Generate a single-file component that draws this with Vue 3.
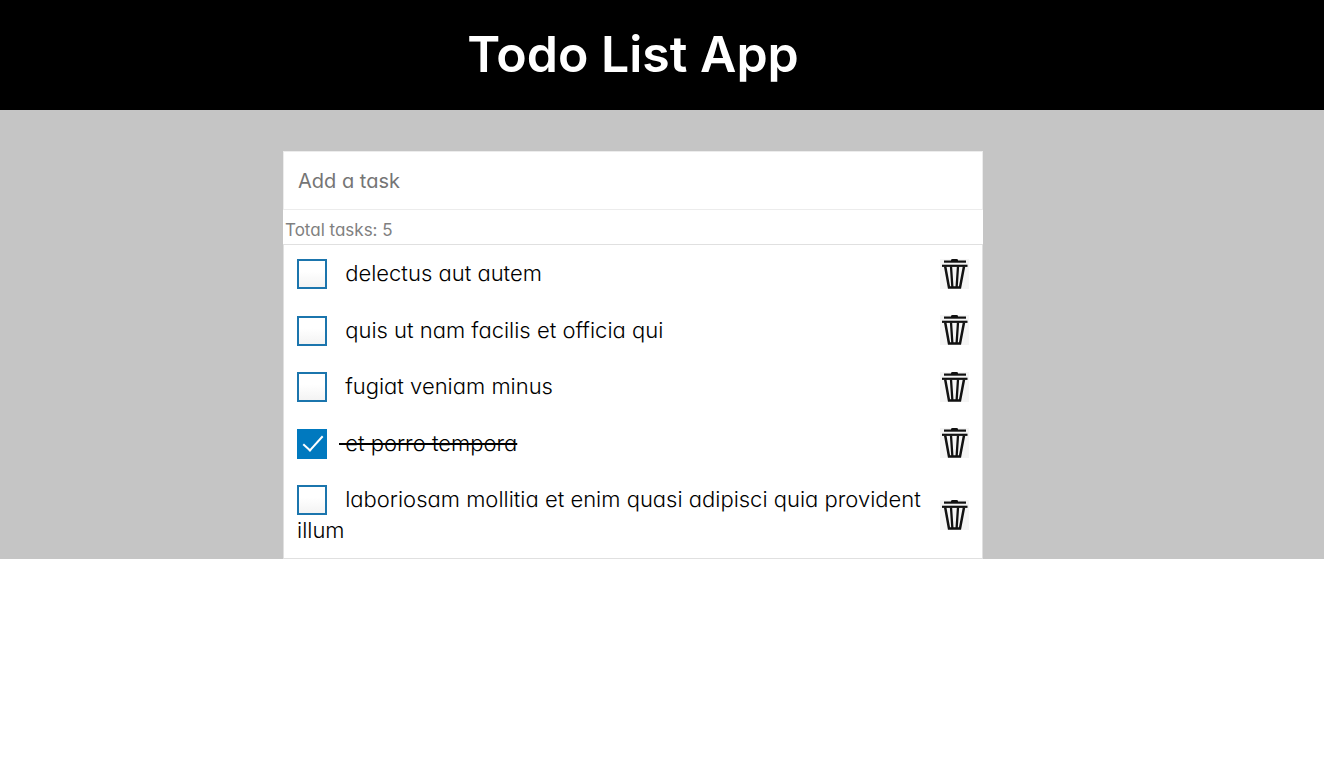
<script setup>
import { ref } from 'vue'

const draft = ref('')
const tasks = ref([
  { id: 1, title: 'delectus aut autem', done: false },
  { id: 2, title: 'quis ut nam facilis et officia qui', done: false },
  { id: 3, title: 'fugiat veniam minus', done: false },
  { id: 4, title: 'et porro tempora', done: true },
  { id: 5, title: 'laboriosam mollitia et enim quasi adipisci quia provident illum', done: false }
])
let nextId = 6

function addTask() {
  const title = draft.value.trim()
  if (!title) return
  tasks.value.push({ id: nextId++, title, done: false })
  draft.value = ''
}

function removeTask(id) {
  tasks.value = tasks.value.filter((task) => task.id !== id)
}
</script>

<template>
  <div class="app">
    <header class="header">
      <h1 class="title">Todo List App</h1>
    </header>
    <main class="main">
      <section class="card">
        <form @submit.prevent="addTask">
          <input v-model="draft" class="new-task" type="text" placeholder="Add a task" aria-label="Add a task" />
        </form>
        <p class="total">Total tasks: {{ tasks.length }}</p>
        <ul class="list">
          <li v-for="task in tasks" :key="task.id" class="task">
            <label class="label">
              <input v-model="task.done" class="check" type="checkbox" />
              <span class="text" :class="{ done: task.done }">&nbsp;{{ task.title }}</span>
            </label>
            <button class="remove" type="button" aria-label="Delete task" @click="removeTask(task.id)">
              <svg viewBox="0 0 29 30" width="29" height="30" aria-hidden="true">
                <path d="M0 0h29v30H0z" fill="#f5f5f5" />
                <path d="M11 2V1.3Q11 0 12.5 0h4Q18 0 18 1.3V2z" fill="#111" />
                <g fill="none" stroke="#111">
                  <path d="M4 2.6h22" stroke-width="2.2" />
                  <path d="M2 6.8h25.500" stroke-width="2.2" />
                  <path d="M5.200 7.500l3.800 21h11L24 7.500" stroke-width="2.500" />
                  <path d="M11 7.500l1.400 21M18 7.500l-1.400 21" stroke-width="2.300" />
                </g>
              </svg>
            </button>
          </li>
        </ul>
      </section>
    </main>
  </div>
</template>

<style>
body {
  margin: 0;
  background: #fff;
}
</style>

<style scoped>
.app {
  font-family: Inter, "Open Sans", sans-serif;
  font-feature-settings: "cv11";
  color: #000;
}

.header,
.main {
  padding-right: 58px;
}

.header {
  background: #000;
  color: #fff;
}

.title {
  margin: 0;
  padding: 14px 0 16px;
  font-size: 50px;
  font-weight: 600;
  line-height: 80px;
  text-align: center;
}

.main {
  padding-top: 41px;
  background: #c5c5c5;
}

.card {
  max-width: 700px;
  margin: 0 auto;
  background: #fff;
}

.new-task {
  display: block;
  box-sizing: border-box;
  width: 100%;
  height: 59px;
  padding: 0 14px;
  border: 1px solid #ececec;
  background: #fff;
  font: inherit;
  font-size: 20px;
  outline: none;
}

.new-task::placeholder {
  color: #757575;
  opacity: 1;
}

.total {
  margin: 0;
  padding: 8px 2px 2px;
  font-size: 17px;
  line-height: 24px;
  color: #808080;
}

.list {
  display: flex;
  flex-direction: column;
  justify-content: space-between;
  min-height: 313px;
  margin: 0;
  padding: 0;
  border: 1px solid #e0e0e0;
  list-style: none;
}

.task {
  display: flex;
  align-items: center;
  padding: 13px 13px 12px;
}

.label {
  flex: 1;
  min-width: 0;
  padding-right: 8px;
  font-size: 22px;
  font-weight: 300;
  line-height: 31px;
}

.check {
  appearance: none;
  box-sizing: border-box;
  width: 30px;
  height: 30px;
  margin: 1px 12px 0 0;
  border: 2px solid #1b75ad;
  background: linear-gradient(#fff 40%, #f3f3f3);
  vertical-align: top;
}

.check:checked {
  border-color: #0079bf;
  background: #0079bf;
}

.check:checked::after {
  content: "";
  display: block;
  box-sizing: border-box;
  width: 20px;
  height: 10px;
  margin: 5px 0 0 4px;
  border: solid #fff;
  border-width: 0 0 2px 2px;
  transform: rotate(-48deg);
}

.done {
  text-decoration: line-through;
  text-decoration-thickness: 2px;
}

.remove {
  width: 29px;
  height: 30px;
  padding: 0;
  border: 0;
  background: none;
}

.remove svg {
  display: block;
}
</style>
